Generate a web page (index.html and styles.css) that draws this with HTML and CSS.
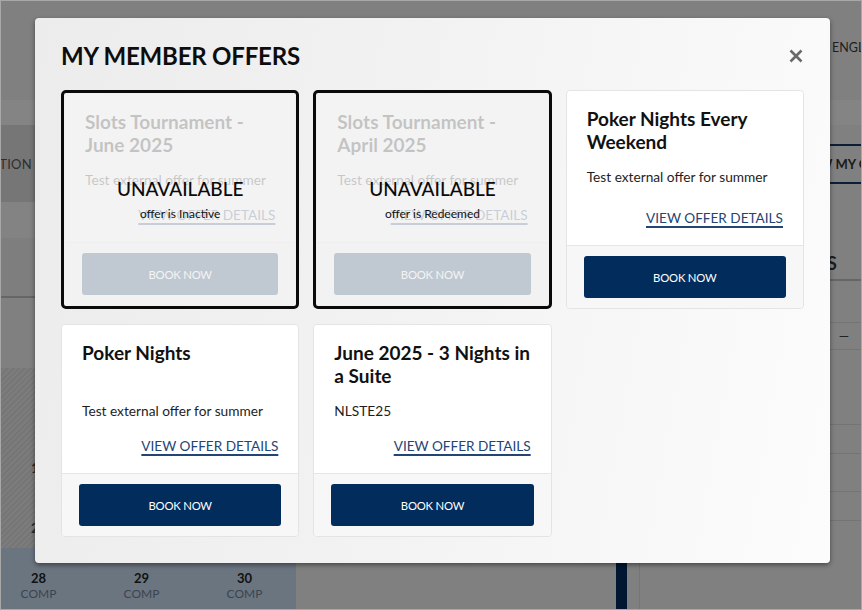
FILE: index.html
```html
<!DOCTYPE html>
<html lang="en">
<head>
<meta charset="utf-8">
<title>My Member Offers</title>
<link rel="stylesheet" href="styles.css">
</head>
<body>
<div class="page">
  <div class="bg">
    <header class="bg-head"><span class="lang">ENGLISH</span></header>
    <div class="bg-sub"></div>
    <nav class="bg-tabs">
      <span class="tab-left">RESERVATION</span>
      <span class="tab-right">VIEW MY OFFERS</span>
    </nav>
    <div class="bg-main">
      <div class="bg-left">
        <div class="left-top"></div>
        <div class="left-gap"></div>
        <div class="cal-hatch">
          <div class="cal-row"><span>7</span></div>
          <div class="cal-row"><span>14</span></div>
          <div class="cal-row"><span>21</span></div>
        </div>
        <div class="cal-bottom">
          <div class="day"><b>28</b><span>COMP</span></div>
          <div class="day"><b>29</b><span>COMP</span></div>
          <div class="day"><b>30</b><span>COMP</span></div>
        </div>
      </div>
      <div class="bg-mid"><div class="navy-bar"></div></div>
      <div class="bg-right">
        <div class="r-head">MY OFFERS</div>
        <div class="r-row r-row1"></div>
        <div class="r-row r-row2"><span class="dash">—</span></div>
        <div class="r-row r-row3"></div>
        <div class="r-row r-row4"></div>
        <div class="r-row r-row5"></div>
        <div class="r-row r-row6"></div>
      </div>
    </div>
  </div>

  <div class="modal" role="dialog" aria-label="My member offers">
    <div class="modal-head">
      <h1 class="modal-title">MY MEMBER OFFERS</h1>
      <button class="close" aria-label="Close">
        <svg width="14" height="14" viewBox="0 0 14 14"><path d="M1.5 1.5 L12.5 12.5 M12.5 1.5 L1.5 12.5" stroke="#6a6a6a" stroke-width="2.6" stroke-linecap="butt"/></svg>
      </button>
    </div>
    <div class="offers">
      <div class="card card-off">
        <div class="card-inner">
          <div class="card-body">
            <h2 class="card-title">Slots Tournament - June 2025</h2>
            <p class="card-desc">Test external offer for summer</p>
            <a class="card-link">VIEW OFFER DETAILS</a>
          </div>
          <div class="card-foot"><span class="btn">BOOK NOW</span></div>
        </div>
        <div class="off-note"><strong>UNAVAILABLE</strong><span>offer is Inactive</span></div>
      </div>
      <div class="card card-off">
        <div class="card-inner">
          <div class="card-body">
            <h2 class="card-title">Slots Tournament - April 2025</h2>
            <p class="card-desc">Test external offer for summer</p>
            <a class="card-link">VIEW OFFER DETAILS</a>
          </div>
          <div class="card-foot"><span class="btn">BOOK NOW</span></div>
        </div>
        <div class="off-note"><strong>UNAVAILABLE</strong><span>offer is Redeemed</span></div>
      </div>
      <div class="card">
        <div class="card-inner">
          <div class="card-body">
            <h2 class="card-title">Poker Nights Every Weekend</h2>
            <p class="card-desc">Test external offer for summer</p>
            <a class="card-link">VIEW OFFER DETAILS</a>
          </div>
          <div class="card-foot"><span class="btn">BOOK NOW</span></div>
        </div>
      </div>
      <div class="card">
        <div class="card-inner">
          <div class="card-body">
            <h2 class="card-title">Poker Nights</h2>
            <p class="card-desc">Test external offer for summer</p>
            <a class="card-link">VIEW OFFER DETAILS</a>
          </div>
          <div class="card-foot"><span class="btn">BOOK NOW</span></div>
        </div>
      </div>
      <div class="card">
        <div class="card-inner">
          <div class="card-body">
            <h2 class="card-title">June 2025 - 3 Nights in a Suite</h2>
            <p class="card-desc">NLSTE25</p>
            <a class="card-link">VIEW OFFER DETAILS</a>
          </div>
          <div class="card-foot"><span class="btn">BOOK NOW</span></div>
        </div>
      </div>
    </div>
  </div>
</div>
</body>
</html>
```
FILE: styles.css
```css
* { box-sizing: border-box; }
html, body { margin: 0; padding: 0; }
body { font-family: Lato, "Open Sans", "Liberation Sans", sans-serif; background: #808080; }

.page {
  position: relative;
  width: 862px;
  height: 610px;
  overflow: hidden;
  background: #808080;
  border: 1px solid #a8a8a8;
}

/* ---------- dimmed page underneath ---------- */
.bg { display: flex; flex-direction: column; height: 100%; }
.bg-head {
  height: 99px;
  padding: 35px 0 0 831px;
  white-space: nowrap;
}
.lang { font-size: 12.5px; color: #1e1e1e; }
.bg-sub { height: 25px; background: #848484; }
.bg-tabs {
  height: 77px;
  display: flex;
  align-items: center;
  justify-content: space-between;
  background: linear-gradient(to right, #767676 0 40px, #808080 40px);
  white-space: nowrap;
  font-size: 13px;
}
.tab-left { margin-left: -58px; color: #2e2e2e; letter-spacing: 0.3px; }
.tab-right {
  margin-right: -56px;
  padding: 10px 10px 10px 14px;
  border-top: 2px solid #0c1d36;
  border-bottom: 2px solid #0c1d36;
  font-weight: 700;
  color: #1a1a1a;
}
.bg-main {
  flex: 1;
  display: grid;
  grid-template-columns: 295px 343px 1fr;
}
.bg-left { display: flex; flex-direction: column; }
.left-top { height: 96px; border-bottom: 2px solid #666; box-shadow: inset 0 -58px 0 #7e7e7e, inset 0 38px 0 #838383; }
.left-gap { height: 70px; }
.cal-hatch {
  height: 180px;
  margin-left: -14px;
  display: grid;
  grid-template-columns: 103px;
  grid-auto-rows: 60px;
  background: repeating-linear-gradient(135deg, #7c7c7c 0 2px, #767676 2px 4px);
}
.cal-row { display: flex; justify-content: center; padding-top: 32px; font-size: 13px; font-weight: 700; color: #2a2a2a; }
.cal-bottom {
  flex: 1;
  margin-left: -14px;
  display: grid;
  grid-template-columns: repeat(3, 103px);
  background: #6b7580;
  padding-top: 23px;
}
.day { display: flex; flex-direction: column; align-items: center; line-height: 15px; }
.day b { font-size: 13px; color: #111; }
.day span { font-size: 12px; color: #3c444e; }
.bg-mid { display: flex; justify-content: flex-end; padding-right: 12px; }
.navy-bar { width: 11px; background: #011630; }
.bg-right { border-left: 1px solid #767676; display: flex; flex-direction: column; }
.r-head {
  height: 79px;
  padding: 50px 24px 0 0;
  text-align: right;
  font-size: 18px;
  font-weight: 700;
  color: #1c1c1c;
  border-bottom: 2px solid #666;
}
.r-row { border-bottom: 1px solid #747474; }
.r-row1 { height: 42px; }
.r-row2 { height: 27px; display: flex; justify-content: flex-end; align-items: center; padding-right: 12px; font-size: 13px; color: #222; }
.r-row3 { height: 75px; }
.r-row4 { height: 29px; }
.r-row5 { height: 38px; }
.r-row6 { height: 29px; }

/* ---------- modal ---------- */
.modal {
  position: absolute;
  left: 34px;
  top: 17px;
  width: 795px;
  padding: 23px 26px 26px;
  border-radius: 4px;
  background: linear-gradient(100deg, #ececec 0%, #f2f2f2 45%, #fcfcfc 100%);
  box-shadow: 0 2px 5px rgba(0, 0, 0, 0.45);
}
.modal-head {
  display: flex;
  align-items: center;
  justify-content: space-between;
  margin-bottom: 19px;
}
.modal-title {
  margin: 0;
  font-size: 24px;
  line-height: 30px;
  font-weight: 700;
  color: #0d0d0d;
  letter-spacing: -0.2px;
}
.close {
  border: 0;
  background: none;
  padding: 0;
  width: 14px;
  height: 14px;
  margin-right: 1px;
  display: flex;
}

.offers {
  display: grid;
  grid-template-columns: repeat(3, 1fr);
  column-gap: 14px;
  row-gap: 15px;
}
.card {
  position: relative;
  background: #fff;
  border: 1px solid #e4e4e4;
  border-radius: 4px;
  display: flex;
  flex-direction: column;
}
.card-inner { flex: 1; display: flex; flex-direction: column; border-radius: 4px; overflow: hidden; }
.card-body {
  flex: 1;
  display: flex;
  flex-direction: column;
  padding: 16px 20px 17px;
  background: #fff;
}
.card-title {
  margin: 0;
  min-height: 46px;
  font-size: 19px;
  line-height: 23px;
  font-weight: 700;
  color: #111;
}
.card-desc {
  margin: 14px 0 0;
  font-size: 13.7px;
  line-height: 20px;
  color: #1e1e1e;
}
.card-link {
  margin-top: auto;
  padding-top: 15px;
  align-self: flex-end;
  font-size: 13.6px;
  line-height: 20px;
  color: #244574;
  text-decoration: underline;
  text-decoration-thickness: 1.5px;
  text-underline-offset: 3px;
}
.card-foot {
  border-top: 1px solid #e6e6e6;
  background: #f7f7f7;
  padding: 10px 17px;
}
.btn {
  display: flex;
  align-items: center;
  justify-content: center;
  height: 42px;
  border-radius: 3px;
  background: #012c5c;
  color: #fff;
  font-size: 11.3px;
  letter-spacing: -0.2px;
}

.card-off {
  border: 3px solid #0a0a0a;
  padding: 1px;
  border-radius: 5px;
  background: #f1f1f1;
}
.card-off .card-inner { opacity: 0.2; }
.off-note {
  position: absolute;
  inset: 0;
  display: flex;
  flex-direction: column;
  align-items: center;
  justify-content: center;
  color: #0a0a0a;
}
.off-note strong { font-size: 19px; line-height: 24px; font-weight: 500; }
.off-note span { margin-top: 5px; font-size: 12px; line-height: 16px; color: #111; }
```
